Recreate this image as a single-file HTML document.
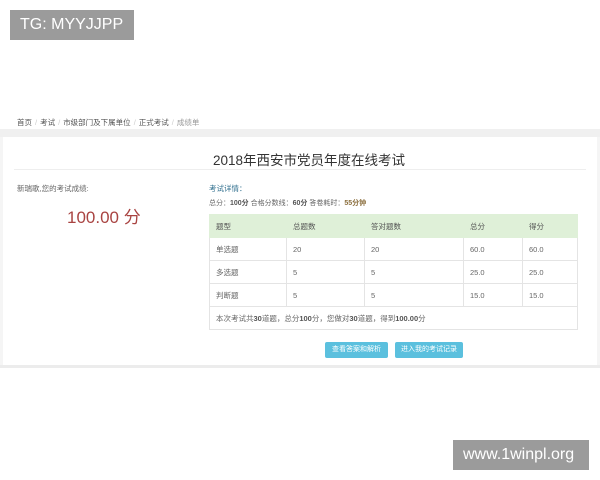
<!DOCTYPE html>
<html><head><meta charset="utf-8"><style>
body{margin:0;width:600px;height:480px;background:#fff;position:relative;overflow:hidden;font-family:"Liberation Sans","Noto Sans CJK SC",sans-serif;}
.a{position:absolute;white-space:nowrap}
.wm{position:absolute;background:#9b9b9b;color:#fff;font-size:16px;line-height:30px;padding:0 10px}
table{position:absolute;left:209px;top:214px;width:369px;border-collapse:collapse;font-size:7.5px;color:#666}
td{border:1px solid #e4e4e4;height:22px;padding:0 0 0 6px}
tr.h td{background:#dff0d8;color:#555;border-color:#dff0d8}
b{color:#555}
.btn{position:absolute;top:342px;height:16px;background:#5bc0de;color:#fff;font-size:7px;line-height:16px;text-align:center;border-radius:2px}
.s{color:#ccc;margin:0 3px}
</style></head><body>
<div class="wm" style="left:10px;top:10px;width:104px">TG: MYYJJPP</div>
<div class="a" style="left:17px;top:117px;font-size:7.5px;color:#555">首页<span class="s">/</span>考试<span class="s">/</span>市级部门及下属单位<span class="s">/</span>正式考试<span class="s">/</span><span style="color:#999">成绩单</span></div>
<div class="a" style="left:0;top:129px;width:600px;height:8px;background:#f0f0f0"></div>
<div class="a" style="left:0;top:137px;width:3px;height:230px;background:#f5f5f5"></div>
<div class="a" style="left:597px;top:137px;width:3px;height:230px;background:#f5f5f5"></div>
<div class="a" style="left:213px;top:149px;font-size:13.5px;color:#333">2018年西安市党员年度在线考试</div>
<div class="a" style="left:14px;top:169px;width:572px;height:1px;background:#eee"></div>
<div class="a" style="left:17px;top:183px;font-size:7.5px;color:#666">新瑞歌,您的考试成绩:</div>
<div class="a" style="left:67px;top:203px;font-size:17px;color:#a94442">100.00 分</div>
<div class="a" style="left:209px;top:183px;font-size:7.5px;color:#31708f">考试详情：</div>
<div class="a" style="left:209px;top:198px;font-size:7px;color:#666">总分：<b>100分</b> 合格分数线：<b>60分</b> 答卷耗时：<b style="color:#8a6d3b">55分钟</b></div>
<table>
<tr class="h"><td style="width:70px">题型</td><td style="width:71px">总题数</td><td style="width:92px">答对题数</td><td style="width:52px">总分</td><td>得分</td></tr>
<tr><td>单选题</td><td>20</td><td>20</td><td>60.0</td><td>60.0</td></tr>
<tr><td>多选题</td><td>5</td><td>5</td><td>25.0</td><td>25.0</td></tr>
<tr><td>判断题</td><td>5</td><td>5</td><td>15.0</td><td>15.0</td></tr>
<tr><td colspan="5">本次考试共<b>30</b>道题，总分<b>100</b>分，您做对<b>30</b>道题，得到<b>100.00</b>分</td></tr>
</table>
<div class="btn" style="left:325px;width:63px">查看答案和解析</div>
<div class="btn" style="left:395px;width:68px">进入我的考试记录</div>
<div class="a" style="left:0;top:365px;width:600px;height:3px;background:#ececec"></div>
<div class="wm" style="left:453px;top:440px;width:116px">www.1winpl.org</div>
</body></html>
